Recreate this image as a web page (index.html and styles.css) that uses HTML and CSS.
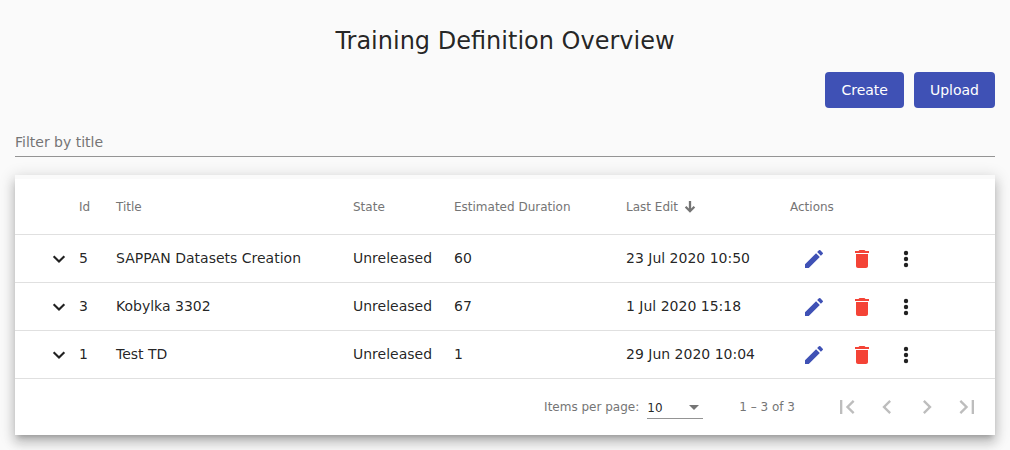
FILE: index.html
```html
<!DOCTYPE html>
<html lang="en">
<head>
<meta charset="utf-8">
<title>Training Definition Overview</title>
<link rel="stylesheet" href="styles.css">
</head>
<body>
<svg class="sprite" aria-hidden="true">
  <symbol id="chevron-down" viewBox="0 0 24 24"><path d="M7.410 8.500 12 13.080l4.590-4.580L18.100 10 12 16.100 5.900 10z"/></symbol>
  <symbol id="edit" viewBox="0 0 24 24"><path d="M3 17.250V21h3.750L17.810 9.940l-3.750-3.750L3 17.250zM20.710 7.040a1 1 0 0 0 0-1.410l-2.340-2.340a1 1 0 0 0-1.410 0l-1.830 1.830 3.750 3.750 1.830-1.830z"/></symbol>
  <symbol id="delete" viewBox="0 0 24 24"><path d="M6 19c0 1.100.9 2 2 2h8c1.100 0 2-.9 2-2V7H6v12zM19 4h-3.500l-1-1h-5l-1 1H5v2h14V4z"/></symbol>
  <symbol id="more" viewBox="0 0 24 24"><circle cx="12" cy="6" r="2.200"/><circle cx="12" cy="12" r="2.200"/><circle cx="12" cy="18" r="2.200"/></symbol>
</svg>
<main class="page">
  <h1 class="title">Training Definition Overview</h1>
  <div class="toolbar">
    <button class="button" type="button">Create</button>
    <button class="button" type="button">Upload</button>
  </div>
  <input class="filter" type="text" placeholder="Filter by title" aria-label="Filter by title">
  <section class="card">
    <table class="table">
      <colgroup><col class="col-toggle"><col class="col-id"><col class="col-title"><col class="col-state"><col class="col-duration"><col class="col-edit"><col class="col-actions"></colgroup>
      <thead>
        <tr><th></th><th>Id</th><th>Title</th><th>State</th><th>Estimated Duration</th>
          <th><button class="sort" type="button">Last Edit <svg class="sort-icon" viewBox="0 0 12 14"><path d="M6 1v10M1.600 6.800 6 11.200l4.400-4.400"/></svg></button></th><th>Actions</th></tr>
      </thead>
      <tbody>
        <tr><td class="toggle"><button class="icon-button" type="button" aria-label="Expand"><svg class="icon"><use href="#chevron-down"/></svg></button></td><td>5</td><td>SAPPAN Datasets Creation</td><td>Unreleased</td><td>60</td><td>23 Jul 2020 10:50</td>
          <td class="controls"><div class="actions"><button class="icon-button edit" type="button" aria-label="Edit"><svg class="icon"><use href="#edit"/></svg></button><button class="icon-button delete" type="button" aria-label="Delete"><svg class="icon"><use href="#delete"/></svg></button><button class="icon-button more" type="button" aria-label="More"><svg class="icon"><use href="#more"/></svg></button></div></td></tr>
        <tr><td class="toggle"><button class="icon-button" type="button" aria-label="Expand"><svg class="icon"><use href="#chevron-down"/></svg></button></td><td>3</td><td>Kobylka 3302</td><td>Unreleased</td><td>67</td><td>1 Jul 2020 15:18</td>
          <td class="controls"><div class="actions"><button class="icon-button edit" type="button" aria-label="Edit"><svg class="icon"><use href="#edit"/></svg></button><button class="icon-button delete" type="button" aria-label="Delete"><svg class="icon"><use href="#delete"/></svg></button><button class="icon-button more" type="button" aria-label="More"><svg class="icon"><use href="#more"/></svg></button></div></td></tr>
        <tr><td class="toggle"><button class="icon-button" type="button" aria-label="Expand"><svg class="icon"><use href="#chevron-down"/></svg></button></td><td>1</td><td>Test TD</td><td>Unreleased</td><td>1</td><td>29 Jun 2020 10:04</td>
          <td class="controls"><div class="actions"><button class="icon-button edit" type="button" aria-label="Edit"><svg class="icon"><use href="#edit"/></svg></button><button class="icon-button delete" type="button" aria-label="Delete"><svg class="icon"><use href="#delete"/></svg></button><button class="icon-button more" type="button" aria-label="More"><svg class="icon"><use href="#more"/></svg></button></div></td></tr>
      </tbody>
    </table>
    <footer class="paginator">
      <label for="page-size">Items per page:</label>
      <span class="select"><select id="page-size"><option>10</option><option>20</option></select></span>
      <span class="range">1 – 3 of 3</span>
      <nav class="pages" aria-label="Pages">
        <button class="page-button" type="button" disabled aria-label="First page"><svg class="page-icon" viewBox="0 0 24 24"><path d="M18.410 16.590 13.820 12l4.590-4.590L17 6l-6 6 6 6zM6 6h2v12H6z"/></svg></button>
        <button class="page-button" type="button" disabled aria-label="Previous page"><svg class="page-icon" viewBox="0 0 24 24"><path d="M15.410 7.410 14 6l-6 6 6 6 1.410-1.410L10.830 12z"/></svg></button>
        <button class="page-button" type="button" disabled aria-label="Next page"><svg class="page-icon" viewBox="0 0 24 24"><path d="M10 6 8.590 7.410 13.170 12l-4.580 4.590L10 18l6-6z"/></svg></button>
        <button class="page-button" type="button" disabled aria-label="Last page"><svg class="page-icon" viewBox="0 0 24 24"><path d="M5.590 7.410 10.180 12l-4.590 4.590L7 18l6-6-6-6zM16 6h2v12h-2z"/></svg></button>
      </nav>
    </footer>
  </section>
</main>
</body>
</html>
```

FILE: styles.css
```css
* { box-sizing: border-box; }
body { margin: 0; background: #fafafa; color: rgba(0, 0, 0, .87); font: 14px/20px "DejaVu Sans", sans-serif; }
button, input, select { font: inherit; color: inherit; }
button { border: 0; background: none; padding: 0; cursor: pointer; }
.sprite { display: none; }
.page { padding: 25px 15px 15px; }
.title { margin: 0 0 15px; font-size: 24px; line-height: 32px; font-weight: 400; text-align: center; }
.toolbar { display: flex; justify-content: flex-end; gap: 10px; }
.button { height: 36px; padding: 0 16px; border-radius: 4px; background: #3f51b5; color: #fff; }
.filter { display: block; width: 100%; height: 28px; margin: 21px 0 18px; padding: 0 0 2px; border: 0; border-bottom: 1px solid #949494; background: none; outline: 0; }
.filter::placeholder { color: #757575; opacity: 1; }
.card {
  border-top: 4px solid #fafafa;
  background: #fff;
  box-shadow: 0 5px 5px -3px rgba(0, 0, 0, .2), 0 8px 10px 1px rgba(0, 0, 0, .14), 0 3px 14px 2px rgba(0, 0, 0, .14);
}
.table { width: 100%; table-layout: fixed; border-collapse: separate; border-spacing: 0; }
.col-toggle { width: 64px; }
.col-id { width: 37px; }
.col-title { width: 237px; }
.col-state { width: 101px; }
.col-duration { width: 172px; }
.col-edit { width: 164px; }
.table th, .table td { padding: 0; text-align: left; white-space: nowrap; border-bottom: 1px solid #e0e0e0; }
.table th { height: 56px; font-size: 12px; font-weight: 400; color: #757575; }
.table td { height: 48px; padding-bottom: 2px; }
.table .toggle { padding: 0 0 0 32px; }
.table .controls { padding-bottom: 0; }
.sort { display: flex; align-items: center; gap: 6px; }
.sort-icon { width: 12px; height: 14px; fill: none; stroke: #757575; stroke-width: 2.3; }
.icon-button { display: flex; align-items: center; justify-content: center; }
.icon { width: 24px; height: 24px; fill: currentColor; }
.actions { display: flex; padding-left: 12px; }
.actions .icon-button { width: 24px; margin-right: 24px; }
.actions .delete { margin-right: 20px; color: #f44336; }
.edit { color: #3f51b5; }
.paginator { display: flex; align-items: center; justify-content: flex-end; height: 56px; padding-right: 8px; font-size: 12px; color: #757575; }
.select { position: relative; width: 56px; margin: 0 36px 0 8px; padding-top: 2px; border-bottom: 1px solid #949494; color: rgba(0, 0, 0, .87); }
.select::after { content: ""; position: absolute; right: 4px; top: 9px; border: 5px solid transparent; border-top-color: #757575; border-bottom: 0; pointer-events: none; }
.select select { display: block; width: 100%; height: 20px; padding: 0; border: 0; appearance: none; background: none; outline: 0; }
.range { margin-right: 32px; }
.pages { display: flex; }
.page-button { display: flex; align-items: center; justify-content: center; width: 40px; height: 40px; color: #bdbdbd; }
.page-icon { width: 28px; height: 28px; fill: currentColor; }
```
